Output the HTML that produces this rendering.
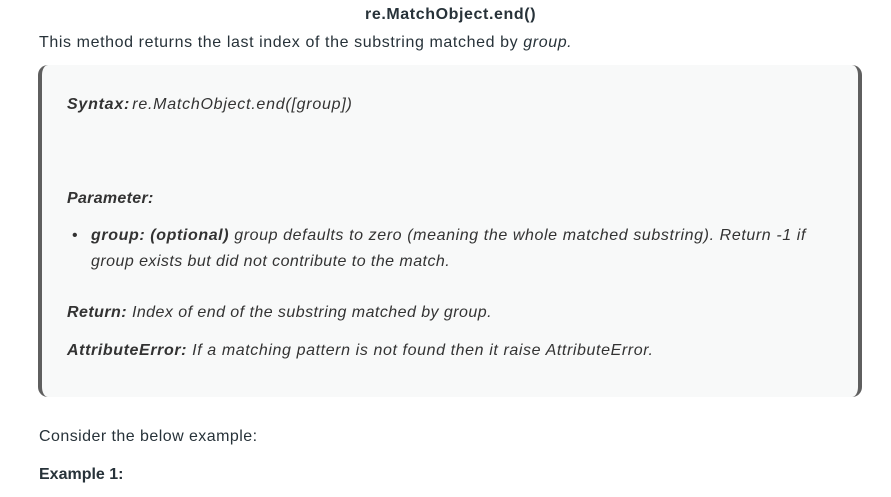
<!DOCTYPE html>
<html><head><meta charset="utf-8"><style>
body{margin:0;width:891px;height:497px;background:#fff;font-family:"Liberation Sans",sans-serif;color:#273239;font-size:16px;position:relative;overflow:hidden}
.t{position:absolute;white-space:nowrap;line-height:20px}
.box{position:absolute;left:38px;top:65px;width:816px;height:332px;background:#f8f9f9;border-left:4px solid #5f5f5f;border-right:4px solid #5f5f5f;border-radius:10px}
i{font-style:italic}
.c{color:#333}
</style></head><body>
<div class="t" style="left:365px;top:5px;font-weight:bold;letter-spacing:0.6px">re.MatchObject.end()</div>
<div class="t" style="left:39px;top:33px;letter-spacing:0.6px">This method returns the last index of the substring matched by <i>group.</i></div>
<div class="box"></div>
<div class="t c" style="left:67px;top:95px;font-style:italic;letter-spacing:0.75px;word-spacing:-3px"><b>Syntax:</b> re.MatchObject.end([group])</div>
<div class="t c" style="left:67px;top:189px;font-style:italic;font-weight:bold;letter-spacing:0.3px">Parameter:</div>
<div class="t c" style="left:72px;top:226px">•</div>
<div class="t c" style="left:91px;top:226px;font-style:italic;letter-spacing:0.6px"><b>group: (optional)</b> group defaults to zero (meaning the whole matched substring). Return -1 if</div>
<div class="t c" style="left:91px;top:252px;font-style:italic;letter-spacing:0.45px">group exists but did not contribute to the match.</div>
<div class="t c" style="left:67px;top:303px;font-style:italic;letter-spacing:0.45px"><b>Return:</b> Index of end of the substring matched by group.</div>
<div class="t c" style="left:67px;top:341px;font-style:italic;letter-spacing:0.6px"><b>AttributeError:</b> If a matching pattern is not found then it raise AttributeError.</div>
<div class="t" style="left:39px;top:427px;letter-spacing:0.45px">Consider the below example:</div>
<div class="t" style="left:39px;top:465px;font-weight:bold">Example 1:</div>
</body></html>
